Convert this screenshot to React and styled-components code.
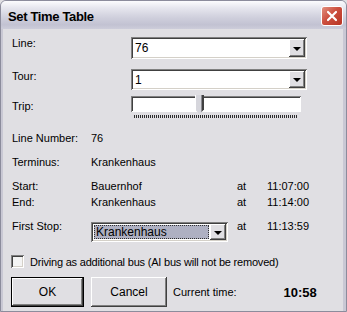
import React from "react";
import styled, { createGlobalStyle } from "styled-components";

const GlobalStyle = createGlobalStyle`
  html, body {
    margin: 0;
    padding: 0;
    width: 347px;
    height: 312px;
    overflow: hidden;
    background: #e0dfe3;
  }
  * { box-sizing: border-box; }
`;

const sunken = `
  box-shadow: inset 1px 1px #808080, inset -1px -1px #ffffff,
    inset 2px 2px #404040, inset -2px -2px #d4d0c8;
`;

const raised = `
  box-shadow: inset -1px -1px #404040, inset 1px 1px #ffffff,
    inset -2px -2px #808080;
`;

const Window = styled.div`
  width: 347px;
  height: 312px;
  display: flex;
  flex-direction: column;
  background: #c9c8d4;
  border: 1px solid #8c8c9c;
  border-radius: 6px 6px 0 0;
  overflow: hidden;
  font-family: "Liberation Sans", Arial, sans-serif;
  font-size: 11px;
  color: #000;
`;

const TitleBar = styled.div`
  height: 28px;
  flex: none;
  display: flex;
  align-items: center;
  justify-content: space-between;
  padding: 0 3px 0 7px;
  background: linear-gradient(#fcfcfe 0%, #e6e6ee 25%, #cfcfdc 60%, #c2c2d2 85%, #cdcdda 100%);
`;

const Title = styled.div`
  font-size: 13px;
  font-weight: bold;
  letter-spacing: -0.35px;
  color: #000;
  padding-top: 2px;
`;

const CloseButton = styled.div`
  width: 22px;
  height: 20px;
  margin-top: 2px;
  border-radius: 3px;
  border: 1px solid #ffffff;
  background: linear-gradient(135deg, #e2907f 0%, #cc4f3f 45%, #b83424 100%);
  display: flex;
  align-items: center;
  justify-content: center;
`;

const Body = styled.div`
  flex: 1;
  margin: 0 3px 0 2px;
  background: #e0dfe3;
  padding: 8px 0 0 9px;
  display: flex;
  flex-direction: column;
`;

const Row = styled.div`
  display: flex;
  align-items: flex-start;
  margin-top: ${(p) => p.$top || 0}px;
`;

const Label = styled.div`
  width: ${(p) => p.$width}px;
  flex: none;
  line-height: 13px;
  white-space: nowrap;
  margin-top: ${(p) => p.$top || 0}px;
`;

const Text = styled.div`
  width: ${(p) => (p.$width ? p.$width + "px" : "auto")};
  flex: none;
  line-height: 13px;
  white-space: nowrap;
  margin-left: ${(p) => p.$left || 0}px;
`;

const ComboBox = styled.div`
  width: ${(p) => p.$width}px;
  height: ${(p) => p.$height}px;
  flex: none;
  display: flex;
  background: #ffffff;
  padding: 2px;
  margin-top: ${(p) => p.$top || 0}px;
  ${sunken}
`;

const ComboValue = styled.div`
  flex: 1;
  display: flex;
  align-items: center;
  padding-left: 2px;
  font-size: 12px;
  background: ${(p) => (p.$selected ? "#aeb0c2" : "transparent")};
  outline: ${(p) => (p.$selected ? "1px dotted #303030" : "none")};
  outline-offset: -1px;
  margin: ${(p) => (p.$selected ? "1px" : "0")};
`;

const DropButton = styled.div`
  width: 16px;
  flex: none;
  background: #e0dfe3;
  display: flex;
  align-items: center;
  justify-content: center;
  ${raised}
  &::after {
    content: "";
    border-left: 4px solid transparent;
    border-right: 4px solid transparent;
    border-top: 4px solid #000;
    margin-top: 1px;
  }
`;

const Slider = styled.div`
  width: 170px;
  flex: none;
  display: flex;
  flex-direction: column;
`;

const SliderTrack = styled.div`
  height: 16px;
  background: #ffffff;
  position: relative;
  box-shadow: inset 1px 1px #808080, inset -1px -1px #ffffff,
    inset 2px 2px #404040;
`;

const Thumb = styled.div`
  position: absolute;
  top: -1px;
  width: 9px;
  height: 19px;
  background: linear-gradient(90deg, #ffffff 0 1px, #d6d6dc 1px 6px, #8a8a90 6px 7px, #404040 7px 9px);
  clip-path: polygon(0 0, 100% 0, 100% 76%, 50% 100%, 0 76%);
`;

const Ticks = styled.div`
  height: 3px;
  margin: 3px 3px 0 3px;
  background: repeating-linear-gradient(90deg, #000 0 1px, transparent 1px 2px);
  opacity: 0.8;
`;

const CheckRow = styled.label`
  display: flex;
  align-items: center;
  gap: 6px;
  margin-top: 13px;
  margin-left: -1px;
  letter-spacing: -0.2px;
`;

const CheckBox = styled.span`
  width: 13px;
  height: 13px;
  flex: none;
  background: #f4f4f4;
  ${sunken}
`;

const ButtonRow = styled.div`
  display: flex;
  align-items: center;
  margin-top: 9px;
  margin-left: -1px;
`;

const Button = styled.div`
  width: ${(p) => p.$width}px;
  height: 30px;
  flex: none;
  display: flex;
  align-items: center;
  justify-content: center;
  font-size: 12px;
  margin-right: ${(p) => p.$gap || 0}px;
  background: #e0dfe3;
  ${(p) =>
    p.$default
      ? `border: 1px solid #000;
         box-shadow: inset -1px -1px #404040, inset 1px 1px #ffffff, inset -2px -2px #808080;`
      : raised}
`;

const Clock = styled.div`
  font-size: 13px;
  font-weight: bold;
  margin-left: 47px;
`;

const CloseIcon = () => (
  <svg width="12" height="12" viewBox="0 0 12 12">
    <path d="M2 2 L10 10 M10 2 L2 10" stroke="#ffffff" strokeWidth="2.2" strokeLinecap="round" />
  </svg>
);

const Combo = ({ value, width, height, selected, top }) => (
  <ComboBox $width={width} $height={height} $top={top}>
    <ComboValue $selected={selected}>{value}</ComboValue>
    <DropButton />
  </ComboBox>
);

const InfoRow = ({ label, value, at, time, top }) => (
  <Row $top={top}>
    <Text $width={79}>{label}</Text>
    <Text $width={146}>{value}</Text>
    {at && <Text $width={30}>{at}</Text>}
    {time && <Text>{time}</Text>}
  </Row>
);

const App = () => {
  return (
    <>
      <GlobalStyle />
      <Window>
        <TitleBar>
          <Title>Set Time Table</Title>
          <CloseButton>
            <CloseIcon />
          </CloseButton>
        </TitleBar>
        <Body>
          <Row>
            <Label $width={119}>Line:</Label>
            <Combo value="76" width={176} height={22} />
          </Row>
          <Row $top={10}>
            <Label $width={119} $top={1}>Tour:</Label>
            <Combo value="1" width={176} height={21} />
          </Row>
          <Row $top={6}>
            <Label $width={119} $top={4}>Trip:</Label>
            <Slider>
              <SliderTrack>
                <Thumb style={{ left: 64 }} />
              </SliderTrack>
              <Ticks />
            </Slider>
          </Row>
          <InfoRow top={14} label="Line Number:" value="76" />
          <InfoRow top={11} label="Terminus:" value="Krankenhaus" />
          <InfoRow top={11} label="Start:" value="Bauernhof" at="at" time="11:07:00" />
          <InfoRow top={3} label="End:" value="Krankenhaus" at="at" time="11:14:00" />
          <Row $top={11}>
            <Label $width={79}>First Stop:</Label>
            <Combo value="Krankenhaus" width={137} height={20} top={2} selected />
            <Text $width={30} $left={9}>at</Text>
            <Text>11:13:59</Text>
          </Row>
          <CheckRow>
            <CheckBox />
            Driving as additional bus (AI bus will not be removed)
          </CheckRow>
          <ButtonRow>
            <Button $width={73} $gap={7} $default>OK</Button>
            <Button $width={76} $gap={6}>Cancel</Button>
            <Text>Current time:</Text>
            <Clock>10:58</Clock>
          </ButtonRow>
        </Body>
      </Window>
    </>
  );
};

export default App;
